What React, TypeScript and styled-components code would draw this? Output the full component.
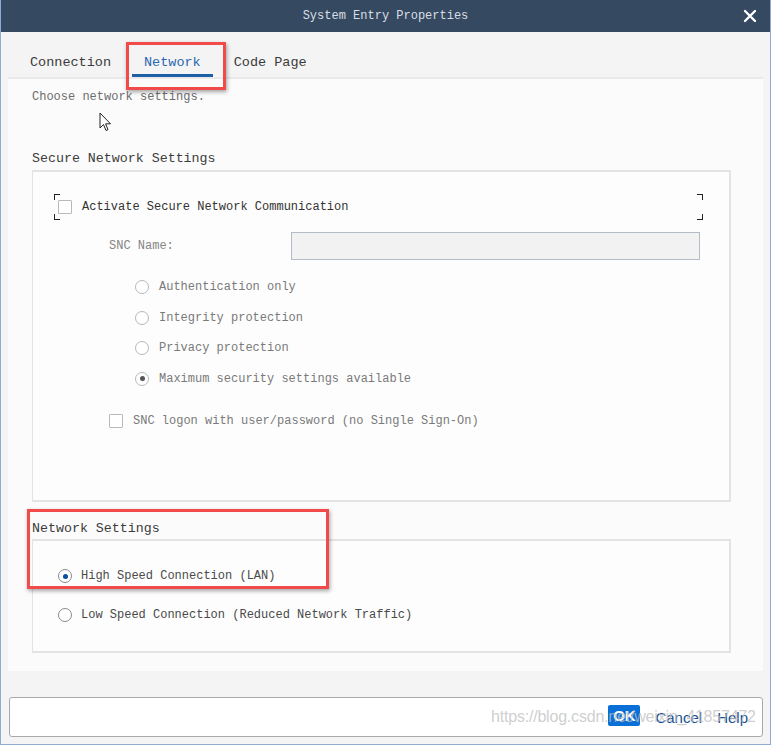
import React from 'react';
import styled, { createGlobalStyle, css } from 'styled-components';

const GlobalStyle = createGlobalStyle`
	html, body {
		margin: 0;
		padding: 0;
		background: #ffffff;
	}
	body {
		font-family: 'Liberation Mono', 'DejaVu Sans Mono', monospace;
	}
`;

const Window = styled.div`
	position: relative;
	box-sizing: border-box;
	width: 771px;
	height: 745px;
	display: flex;
	flex-direction: column;
	background: #f4f4f4;
	border: 1px solid #8eabd0;
	border-top: none;
	overflow: hidden;
`;

const TitleBar = styled.div`
	height: 32px;
	flex: none;
	background: #354a60;
	display: flex;
	align-items: center;
	justify-content: center;
	position: relative;
	color: #d9dee5;
	font-size: 12px;
`;

const CloseButton = styled.div`
	position: absolute;
	right: 13px;
	top: 9px;
	width: 14px;
	height: 14px;
	display: flex;
`;

const Body = styled.div`
	flex: 1;
	display: flex;
	flex-direction: column;
	padding: 0 7px 0 7px;
`;

const TabBar = styled.div`
	height: 45px;
	flex: none;
	display: flex;
	gap: 9px;
	padding-left: 10px;
`;

const Tab = styled.div<{ $active?: boolean }>`
	padding: 0 12px 3px;
	display: flex;
	align-items: flex-end;
	font-size: 13.5px;
	line-height: 16px;
	color: ${(p) => (p.$active ? '#2b68b0' : '#3a3a3a')};
	border-bottom: 3px solid ${(p) => (p.$active ? '#1f5fa8' : 'transparent')};
`;

const Panel = styled.div`
	height: 594px;
	flex: none;
	box-sizing: border-box;
	background: #fbfbfb;
	border-top: 2px solid #e9e9e9;
	padding: 10px 32px 0 24px;
	display: flex;
	flex-direction: column;
`;

const Intro = styled.div`
	font-size: 12px;
	line-height: 16px;
	color: #6d6d6d;
`;

const SectionTitle = styled.div<{ $top: number; $bottom: number }>`
	margin-top: ${(p) => p.$top}px;
	margin-bottom: ${(p) => p.$bottom}px;
	font-size: 13.3px;
	line-height: 18px;
	color: #3c3c3c;
`;

const GroupBox = styled.div<{ $height: number }>`
	box-sizing: border-box;
	height: ${(p) => p.$height}px;
	border: 1px solid #e3e3e3;
	border-width: 2px 2px 2px 1px;
	background: #fdfdfd;
	display: flex;
	flex-direction: column;
`;

const FocusRow = styled.div`
	position: relative;
	margin: 22px 26px 0 21px;
	height: 26px;
	display: flex;
	align-items: center;
	padding-left: 4px;
`;

const cornerBase = css`
	position: absolute;
	width: 5px;
	height: 5px;
	border-color: #222;
	border-style: solid;
	border-width: 0;
`;

const Corner = styled.span<{ $pos: 'tl' | 'tr' | 'bl' | 'br' }>`
	${cornerBase};
	${(p) => p.$pos === 'tl' && 'top: 0; left: 0; border-top-width: 1px; border-left-width: 1px;'}
	${(p) => p.$pos === 'tr' && 'top: 0; right: 0; border-top-width: 1px; border-right-width: 1px;'}
	${(p) => p.$pos === 'bl' && 'bottom: 0; left: 0; border-bottom-width: 1px; border-left-width: 1px;'}
	${(p) => p.$pos === 'br' && 'bottom: 0; right: 0; border-bottom-width: 1px; border-right-width: 1px;'}
`;

const Checkbox = styled.span`
	width: 12px;
	height: 12px;
	flex: none;
	border: 1px solid #b9b9b9;
	background: #ffffff;
	border-radius: 1px;
`;

const Label = styled.span<{ $tone?: 'dark' | 'muted' | 'mid' }>`
	font-size: 12px;
	white-space: pre;
	color: ${(p) => (p.$tone === 'dark' ? '#333333' : p.$tone === 'mid' ? '#4a4a4a' : '#7a7a7a')};
`;

const OptionRow = styled.div<{ $indent: number; $height: number; $gap: number }>`
	display: flex;
	align-items: center;
	height: ${(p) => p.$height}px;
	padding-left: ${(p) => p.$indent}px;
	gap: ${(p) => p.$gap}px;
`;

const NameRow = styled.div`
	margin-top: 12px;
	display: flex;
	align-items: center;
	padding-left: 76px;
	padding-right: 29px;
	height: 28px;
`;

const NameLabel = styled.span`
	width: 182px;
	font-size: 12px;
	color: #858585;
`;

const NameInput = styled.div`
	flex: 1;
	height: 28px;
	box-sizing: border-box;
	background: #f2f2f2;
	border: 1px solid #b3bcc7;
`;

const RadioList = styled.div<{ $top: number; $gap?: number }>`
	margin-top: ${(p) => p.$top}px;
	display: flex;
	flex-direction: column;
	gap: ${(p) => p.$gap ?? 0}px;
`;

const Radio = styled.span<{ $checked?: boolean; $enabled?: boolean }>`
	width: 14px;
	height: 14px;
	flex: none;
	box-sizing: border-box;
	border-radius: 50%;
	border: 1px solid ${(p) => (p.$enabled ? '#8c8c8c' : '#b8b8b8')};
	background: #ffffff;
	display: flex;
	align-items: center;
	justify-content: center;
	&::after {
		content: '';
		width: 5px;
		height: 5px;
		border-radius: 50%;
		background: ${(p) => (p.$enabled ? '#0b4d9e' : '#555555')};
		display: ${(p) => (p.$checked ? 'block' : 'none')};
	}
`;

const Footer = styled.div`
	flex: 1;
	display: flex;
	flex-direction: column;
	justify-content: flex-end;
	padding: 0 0 7px 1px;
`;

const ActionBar = styled.div`
	height: 40px;
	box-sizing: border-box;
	background: #ffffff;
	border: 1px solid #a9a9a9;
	border-radius: 3px;
	display: flex;
	align-items: center;
	justify-content: flex-end;
	padding-right: 14px;
	gap: 15px;
	font-family: 'Liberation Sans', Arial, sans-serif;
`;

const OkButton = styled.div`
	width: 32px;
	height: 21px;
	margin-top: -4px;
	background: #0a6fd6;
	border-radius: 2px;
	color: #ffffff;
	font-weight: bold;
	font-size: 15px;
	display: flex;
	align-items: center;
	justify-content: center;
`;

const LinkButton = styled.div`
	font-size: 15px;
	color: #184f91;
`;

const Highlight = styled.div`
	position: absolute;
	box-sizing: border-box;
	border: 3px solid #f04a4a;
	box-shadow: 1px 2px 4px rgba(0, 0, 0, 0.35);
	pointer-events: none;
`;

const Watermark = styled.div`
	position: absolute;
	left: 490px;
	top: 708px;
	font-family: 'Liberation Sans', Arial, sans-serif;
	font-size: 16px;
	color: rgba(190, 190, 190, 0.75);
	white-space: nowrap;
	letter-spacing: -0.2px;
	pointer-events: none;
`;

const Cursor = styled.svg`
	position: absolute;
	left: 98px;
	top: 112px;
`;

const secureOptions = [
	{ label: 'Authentication only' },
	{ label: 'Integrity protection' },
	{ label: 'Privacy protection' },
	{ label: 'Maximum security settings available', checked: true },
];

export default function App() {
	return (
		<>
			<GlobalStyle />
			<Window>
				<TitleBar>
					System Entry Properties
					<CloseButton>
						<svg width="14" height="14" viewBox="0 0 14 14">
							<path d="M2 2 L12 12 M12 2 L2 12" stroke="#ffffff" strokeWidth="2.4" strokeLinecap="round" />
						</svg>
					</CloseButton>
				</TitleBar>
				<Body>
					<TabBar>
						<Tab>Connection</Tab>
						<Tab $active>Network</Tab>
						<Tab>Code Page</Tab>
					</TabBar>
					<Panel>
						<Intro>Choose network settings.</Intro>
						<SectionTitle $top={45} $bottom={2}>Secure Network Settings</SectionTitle>
						<GroupBox $height={332}>
							<FocusRow>
								<Corner $pos="tl" />
								<Corner $pos="tr" />
								<Corner $pos="bl" />
								<Corner $pos="br" />
								<Checkbox />
								<Label $tone="dark" style={{ marginLeft: 10 }}>
									Activate Secure Network Communication
								</Label>
							</FocusRow>
							<NameRow>
								<NameLabel>SNC Name:</NameLabel>
								<NameInput />
							</NameRow>
							<RadioList $top={12}>
								{secureOptions.map((o) => (
									<OptionRow key={o.label} $indent={102} $height={30.5} $gap={10}>
										<Radio $checked={o.checked} />
										<Label>{o.label}</Label>
									</OptionRow>
								))}
							</RadioList>
							<OptionRow $indent={76} $height={24} $gap={10} style={{ marginTop: 15 }}>
								<Checkbox />
								<Label>SNC logon with user/password (no Single Sign-On)</Label>
							</OptionRow>
						</GroupBox>
						<SectionTitle $top={18} $bottom={1}>Network Settings</SectionTitle>
						<GroupBox $height={114}>
							<RadioList $top={20} $gap={9}>
								<OptionRow $indent={25} $height={30} $gap={9}>
									<Radio $checked $enabled />
									<Label $tone="mid">High Speed Connection (LAN)</Label>
								</OptionRow>
								<OptionRow $indent={25} $height={30} $gap={9}>
									<Radio $enabled />
									<Label $tone="mid">Low Speed Connection (Reduced Network Traffic)</Label>
								</OptionRow>
							</RadioList>
						</GroupBox>
					</Panel>
					<Footer>
						<ActionBar>
							<OkButton>OK</OkButton>
							<LinkButton>Cancel</LinkButton>
							<LinkButton>Help</LinkButton>
						</ActionBar>
					</Footer>
				</Body>
				<Highlight style={{ left: 125, top: 42, width: 100, height: 48 }} />
				<Highlight style={{ left: 26, top: 509, width: 302, height: 80 }} />
				<Cursor width="13" height="21" viewBox="0 0 13 21">
					<path d="M1 1 L1 16 L4.5 12.5 L7 18.5 L9 17.6 L6.6 11.8 L11.5 11.8 Z" fill="#ffffff" stroke="#222222" strokeWidth="1" strokeLinejoin="round" />
				</Cursor>
				<Watermark>https://blog.csdn.net/weixin_41857472</Watermark>
			</Window>
		</>
	);
}
